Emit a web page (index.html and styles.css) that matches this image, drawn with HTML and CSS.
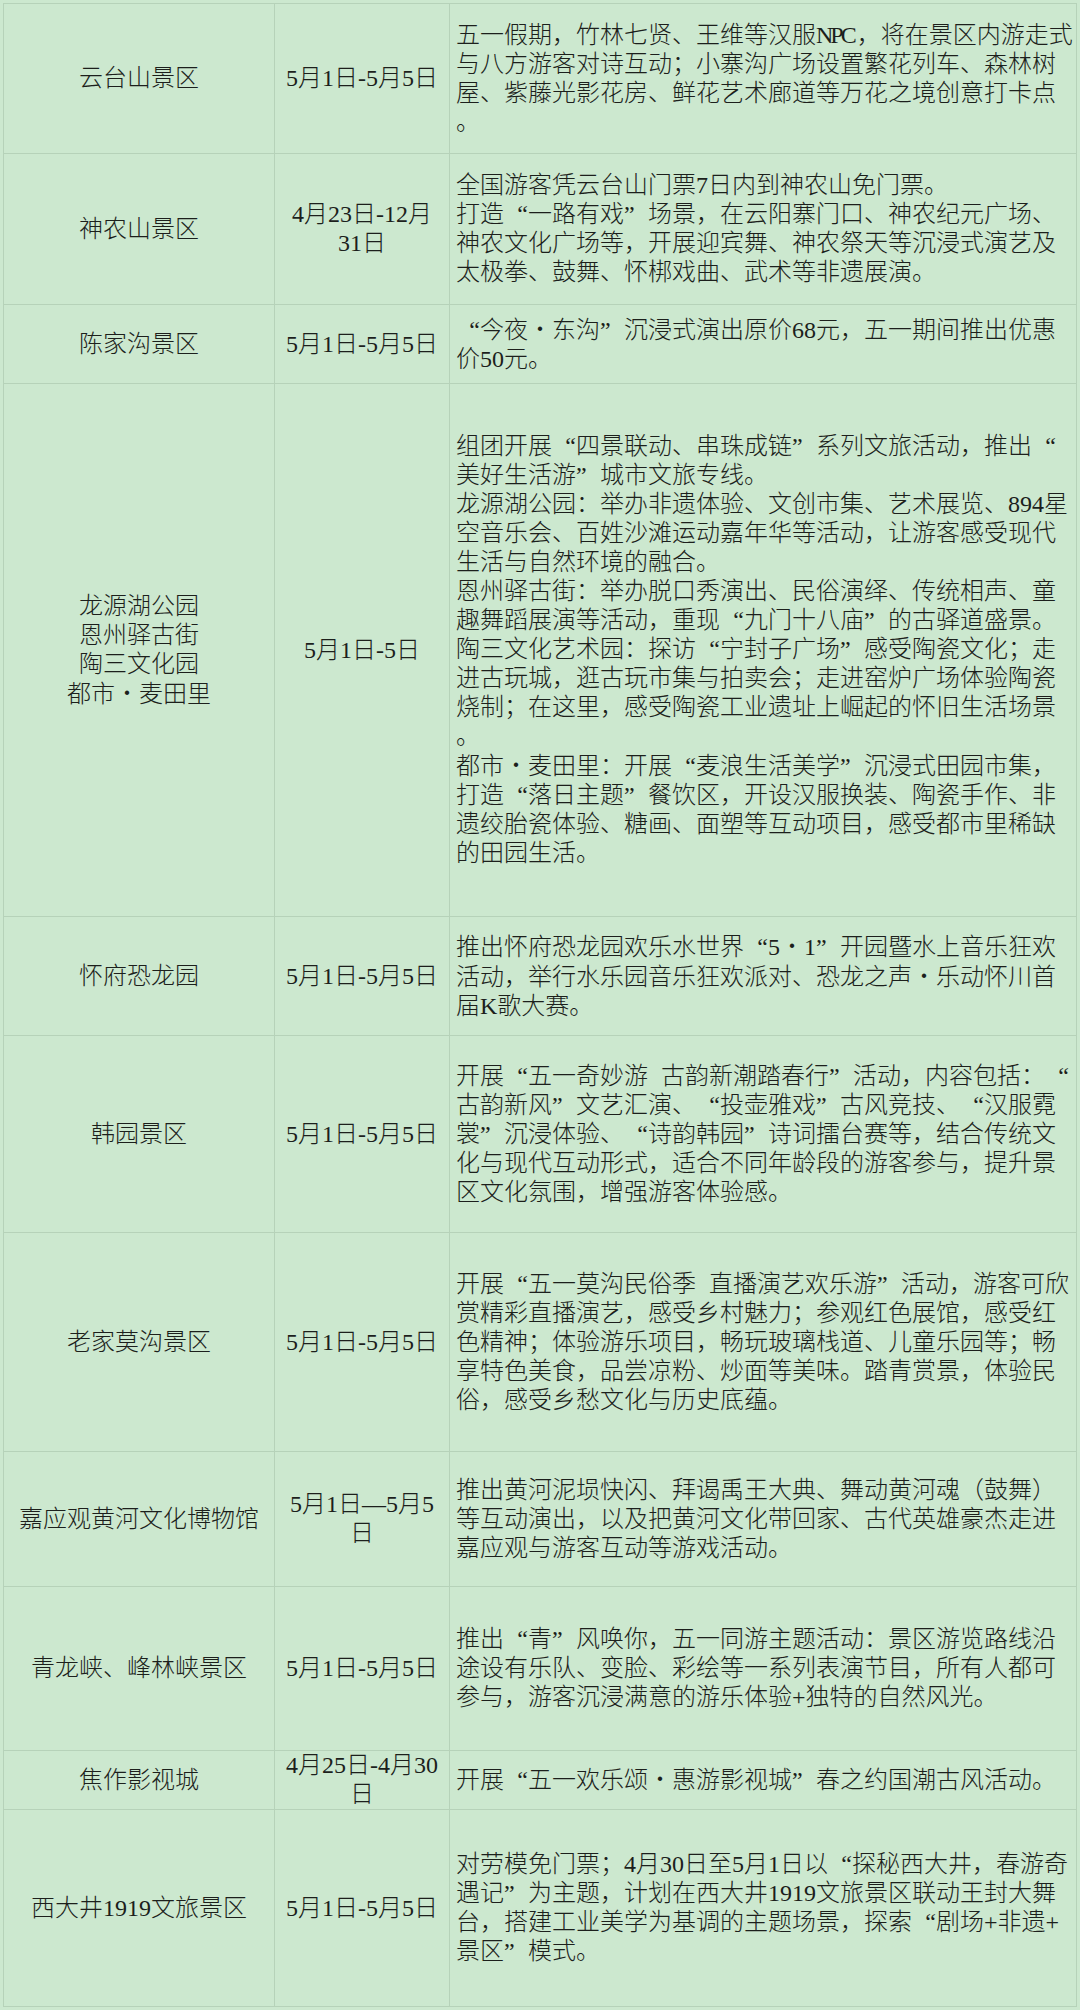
FILE: index.html
```html
<!DOCTYPE html>
<html lang="zh-CN">
<head>
<meta charset="utf-8">
<title>五一景区活动</title>
<link rel="stylesheet" href="styles.css">
</head>
<body>
<table class="sheet">
  <colgroup><col class="col-name"><col class="col-date"><col class="col-desc"></colgroup>
  <tr class="r1">
    <td class="name">云台山景区</td>
    <td class="date">5月1日-5月5日</td>
    <td class="desc">五一假期，竹林七贤、王维等汉服<span class="tight">NPC</span>，将在景区内游走式<br>与八方游客对诗互动；小寨沟广场设置繁花列车、森林树<br>屋、紫藤光影花房、鲜花艺术廊道等万花之境创意打卡点<br>。</td>
  </tr>
  <tr class="r2">
    <td class="name">神农山景区</td>
    <td class="date">4月23日-12月<br>31日</td>
    <td class="desc">全国游客凭云台山门票7日内到神农山免门票。<br>打造<span class="ql">“</span>一路有戏<span class="qr">”</span>场景，在云阳寨门口、神农纪元广场、<br>神农文化广场等，开展迎宾舞、神农祭天等沉浸式演艺及<br>太极拳、鼓舞、怀梆戏曲、武术等非遗展演。</td>
  </tr>
  <tr class="r3">
    <td class="name">陈家沟景区</td>
    <td class="date">5月1日-5月5日</td>
    <td class="desc"><span class="ql">“</span>今夜<span class="dot">·</span>东沟<span class="qr">”</span>沉浸式演出原价68元，五一期间推出优惠<br>价50元。</td>
  </tr>
  <tr class="r4">
    <td class="name">龙源湖公园<br>恩州驿古街<br>陶三文化园<br>都市<span class="dot">·</span>麦田里</td>
    <td class="date">5月1日-5日</td>
    <td class="desc">组团开展<span class="ql">“</span>四景联动、串珠成链<span class="qr">”</span>系列文旅活动，推出<span class="ql">“</span><br>美好生活游<span class="qr">”</span>城市文旅专线。<br>龙源湖公园：举办非遗体验、文创市集、艺术展览、894星<br>空音乐会、百姓沙滩运动嘉年华等活动，让游客感受现代<br>生活与自然环境的融合。<br>恩州驿古街：举办脱口秀演出、民俗演绎、传统相声、童<br>趣舞蹈展演等活动，重现<span class="ql">“</span>九门十八庙<span class="qr">”</span>的古驿道盛景。<br>陶三文化艺术园：探访<span class="ql">“</span>宁封子广场<span class="qr">”</span>感受陶瓷文化；走<br>进古玩城，逛古玩市集与拍卖会；走进窑炉广场体验陶瓷<br>烧制；在这里，感受陶瓷工业遗址上崛起的怀旧生活场景<br>。<br>都市<span class="dot">·</span>麦田里：开展<span class="ql">“</span>麦浪生活美学<span class="qr">”</span>沉浸式田园市集，<br>打造<span class="ql">“</span>落日主题<span class="qr">”</span>餐饮区，开设汉服换装、陶瓷手作、非<br>遗绞胎瓷体验、糖画、面塑等互动项目，感受都市里稀缺<br>的田园生活。</td>
  </tr>
  <tr class="r5">
    <td class="name">怀府恐龙园</td>
    <td class="date">5月1日-5月5日</td>
    <td class="desc">推出怀府恐龙园欢乐水世界<span class="ql">“</span>5<span class="dot">·</span>1<span class="qr">”</span>开园暨水上音乐狂欢<br>活动，举行水乐园音乐狂欢派对、恐龙之声<span class="dot">·</span>乐动怀川首<br>届K歌大赛。</td>
  </tr>
  <tr class="r6">
    <td class="name">韩园景区</td>
    <td class="date">5月1日-5月5日</td>
    <td class="desc">开展<span class="ql">“</span>五一奇妙游 古韵新潮踏春行<span class="qr">”</span>活动，内容包括：<span class="ql">“</span><br>古韵新风<span class="qr">”</span>文艺汇演、<span class="ql">“</span>投壶雅戏<span class="qr">”</span>古风竞技、<span class="ql">“</span>汉服霓<br>裳<span class="qr">”</span>沉浸体验、<span class="ql">“</span>诗韵韩园<span class="qr">”</span>诗词擂台赛等，结合传统文<br>化与现代互动形式，适合不同年龄段的游客参与，提升景<br>区文化氛围，增强游客体验感。</td>
  </tr>
  <tr class="r7">
    <td class="name">老家莫沟景区</td>
    <td class="date">5月1日-5月5日</td>
    <td class="desc">开展<span class="ql">“</span>五一莫沟民俗季 直播演艺欢乐游<span class="qr">”</span>活动，游客可欣<br>赏精彩直播演艺，感受乡村魅力；参观红色展馆，感受红<br>色精神；体验游乐项目，畅玩玻璃栈道、儿童乐园等；畅<br>享特色美食，品尝凉粉、炒面等美味。踏青赏景，体验民<br>俗，感受乡愁文化与历史底蕴。</td>
  </tr>
  <tr class="r8">
    <td class="name">嘉应观黄河文化博物馆</td>
    <td class="date">5月1日—5月5<br>日</td>
    <td class="desc">推出黄河泥埙快闪、拜谒禹王大典、舞动黄河魂（鼓舞）<br>等互动演出，以及把黄河文化带回家、古代英雄豪杰走进<br>嘉应观与游客互动等游戏活动。</td>
  </tr>
  <tr class="r9">
    <td class="name">青龙峡、峰林峡景区</td>
    <td class="date">5月1日-5月5日</td>
    <td class="desc">推出<span class="ql">“</span>青<span class="qr">”</span>风唤你，五一同游主题活动：景区游览路线沿<br>途设有乐队、变脸、彩绘等一系列表演节目，所有人都可<br>参与，游客沉浸满意的游乐体验+独特的自然风光。</td>
  </tr>
  <tr class="r10">
    <td class="name">焦作影视城</td>
    <td class="date">4月25日-4月30<br>日</td>
    <td class="desc">开展<span class="ql">“</span>五一欢乐颂<span class="dot">·</span>惠游影视城<span class="qr">”</span>春之约国潮古风活动。</td>
  </tr>
  <tr class="r11">
    <td class="name">西大井1919文旅景区</td>
    <td class="date">5月1日-5月5日</td>
    <td class="desc">对劳模免门票；4月30日至5月1日以<span class="ql">“</span>探秘西大井，春游奇<br>遇记<span class="qr">”</span>为主题，计划在西大井1919文旅景区联动王封大舞<br>台，搭建工业美学为基调的主题场景，探索<span class="ql">“</span>剧场+非遗+<br>景区<span class="qr">”</span>模式。</td>
  </tr>
</table>
</body>
</html>
```

FILE: styles.css
```css
html, body {
  margin: 0;
  padding: 0;
  background: #cce8cf;
}

body {
  padding: 3px 0 0 3px;
  font-family: "Liberation Serif", "Noto Sans CJK SC", serif;
  font-size: 24px;
  font-weight: 300;
  line-height: 29px;
  color: #1c1f1c;
}

.sheet {
  border-collapse: collapse;
  table-layout: fixed;
  width: 1073px;
}

.col-name { width: 271px; }
.col-date { width: 175px; }
.col-desc { width: 627px; }

.sheet td {
  border: 1px solid #b6d2b9;
  padding: 0 6px;
  vertical-align: middle;
}

.name {
  text-align: center;
}

.date {
  text-align: center;
  padding: 0 4px;
}

.desc {
  text-align: left;
  white-space: nowrap;
  word-spacing: 7px;
  padding-right: 2px;
}

.tight {
  letter-spacing: -3px;
  margin-right: 3px;
}

.ql,
.qr,
.dot {
  display: inline-block;
  width: 24px;
}

.ql { text-align: right; }
.qr { text-align: left; }

.dot {
  text-align: center;
  font-weight: 700;
  font-size: 27px;
}

.r1 { height: 150px; }
.r2 { height: 151px; }
.r3 { height: 79px; }
.r4 { height: 533px; }
.r5 { height: 119px; }
.r6 { height: 197px; }
.r7 { height: 219px; }
.r8 { height: 135px; }
.r9 { height: 164px; }
.r10 { height: 59px; }
.r11 { height: 197px; }
```
